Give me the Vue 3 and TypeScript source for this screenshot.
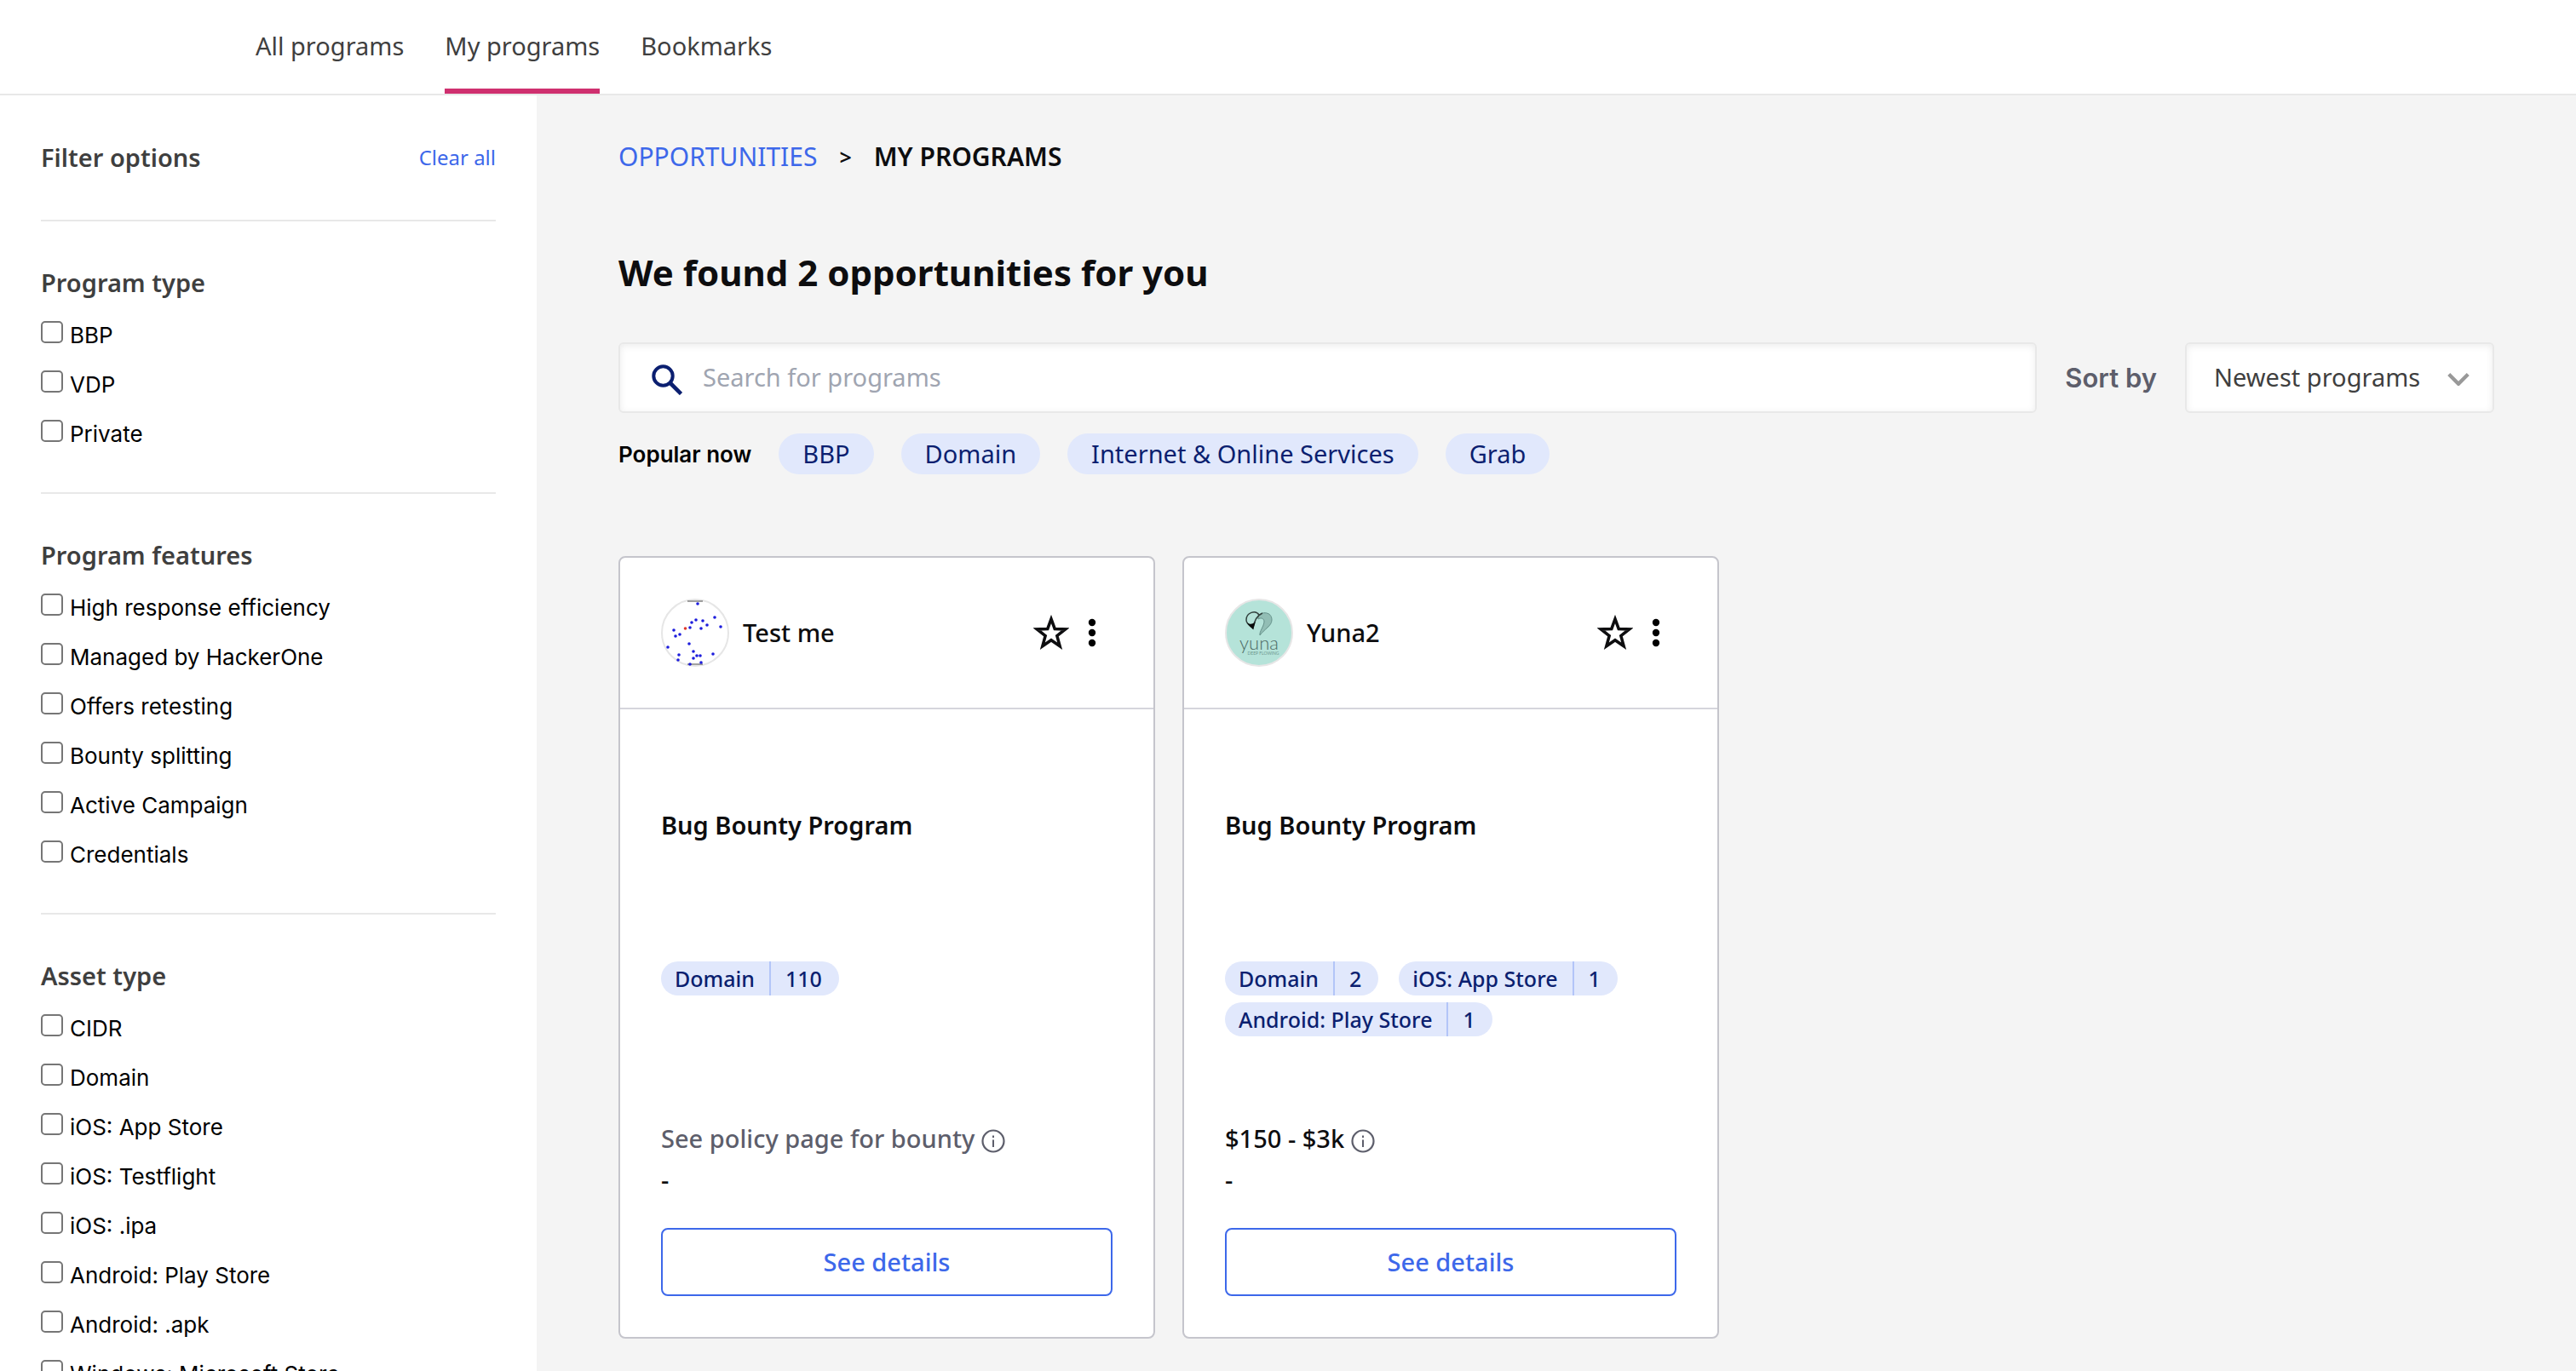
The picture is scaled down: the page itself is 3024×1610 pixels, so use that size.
<script setup lang="ts">
import { ref } from 'vue'

interface FilterGroup {
  title: string
  options: string[]
}
interface Asset {
  name: string
  count: number
}
interface Program {
  name: string
  logo: 'dots' | 'yuna'
  type: string
  assets: Asset[]
  bounty: string
  muted: boolean
  note: string
}

const tabs = ['All programs', 'My programs', 'Bookmarks']
const activeTab = ref('My programs')
const query = ref('')
const sort = ref('Newest programs')
const popular = ['BBP', 'Domain', 'Internet & Online Services', 'Grab']

const groups: FilterGroup[] = [
  { title: 'Program type', options: ['BBP', 'VDP', 'Private'] },
  {
    title: 'Program features',
    options: [
      'High response efficiency',
      'Managed by HackerOne',
      'Offers retesting',
      'Bounty splitting',
      'Active Campaign',
      'Credentials',
    ],
  },
  {
    title: 'Asset type',
    options: [
      'CIDR',
      'Domain',
      'iOS: App Store',
      'iOS: Testflight',
      'iOS: .ipa',
      'Android: Play Store',
      'Android: .apk',
      'Windows: Microsoft Store',
    ],
  },
]
const selected = ref<string[]>([])

const programs: Program[] = [
  {
    name: 'Test me',
    logo: 'dots',
    type: 'Bug Bounty Program',
    assets: [{ name: 'Domain', count: 110 }],
    bounty: 'See policy page for bounty',
    muted: true,
    note: '-',
  },
  {
    name: 'Yuna2',
    logo: 'yuna',
    type: 'Bug Bounty Program',
    assets: [
      { name: 'Domain', count: 2 },
      { name: 'iOS: App Store', count: 1 },
      { name: 'Android: Play Store', count: 1 },
    ],
    bounty: '$150 - $3k',
    muted: false,
    note: '-',
  },
]

// Centres of the blue dots in the first program's logo, on an 80 unit canvas
const dots: [number, number][] = [
  [43, 6], [63, 22], [70, 33], [54, 31], [49, 26], [41, 25], [36, 28], [34, 34],
  [47, 35], [15, 37], [17, 44], [22, 42], [33, 53], [8, 57], [38, 62], [21, 66],
  [42, 67], [46, 67], [38, 70], [61, 65], [20, 72], [47, 75], [34, 77],
]
</script>

<template>
  <div class="page">
    <header class="topbar">
      <nav class="tabs" aria-label="Programs">
        <a
          v-for="tab in tabs"
          :key="tab"
          href="#"
          class="tab"
          :class="{ active: tab === activeTab }"
          @click.prevent="activeTab = tab"
        >{{ tab }}</a>
      </nav>
    </header>

    <div class="layout">
      <aside class="sidebar">
        <div class="filter-head">
          <h2 class="filter-title">Filter options</h2>
          <button type="button" class="clear" @click="selected = []">Clear all</button>
        </div>
        <section v-for="group in groups" :key="group.title" class="group">
          <h2 class="filter-title">{{ group.title }}</h2>
          <div class="options">
            <label v-for="option in group.options" :key="option" class="option">
              <input v-model="selected" type="checkbox" class="box" :value="group.title + option" />
              <span>{{ option }}</span>
            </label>
          </div>
        </section>
      </aside>

      <main class="main">
        <nav class="crumbs" aria-label="Breadcrumb">
          <a href="#" class="crumb-link">OPPORTUNITIES</a>
          <span class="crumb-sep">&gt;</span>
          <span class="crumb-here">MY PROGRAMS</span>
        </nav>

        <h1 class="title">We found 2 opportunities for you</h1>

        <div class="controls">
          <label class="search">
            <svg class="search-icon" viewBox="0 0 36 36" aria-hidden="true">
              <circle cx="13.5" cy="13.5" r="11.200" fill="none" stroke="#0b1f70" stroke-width="4" />
              <path d="M21.500 21.500l13 13" stroke="#0b1f70" stroke-width="4.600" fill="none" />
            </svg>
            <input v-model="query" type="text" class="search-input" placeholder="Search for programs" aria-label="Search for programs" />
          </label>
          <label class="sort-label" for="sort">Sort by</label>
          <div class="select-wrap">
            <select id="sort" v-model="sort" class="select">
              <option>Newest programs</option>
            </select>
            <svg class="chevron" viewBox="0 0 24 14" aria-hidden="true">
              <path d="M1.500 1.500L12 12L22.500 1.500" fill="none" stroke="#999" stroke-width="4" />
            </svg>
          </div>
        </div>

        <div class="popular">
          <span class="popular-label">Popular now</span>
          <button v-for="term in popular" :key="term" type="button" class="chip">{{ term }}</button>
        </div>

        <div class="cards">
          <article v-for="program in programs" :key="program.name" class="card">
            <header class="card-head">
              <svg v-if="program.logo === 'dots'" class="logo" viewBox="0 0 80 80" aria-hidden="true">
                <circle cx="40" cy="40" r="39" fill="#fff" stroke="#e6e6e6" stroke-width="2" />
                <path d="M31 3h18M31 77h18" stroke="#444" stroke-width="1" />
                <circle v-for="(dot, i) in dots" :key="i" :cx="dot[0]" :cy="dot[1]" r="1.800" fill="#1c1cdc" />
                <circle cx="28.500" cy="35" r="1.800" fill="#e03a2f" />
              </svg>
              <svg v-else class="logo" viewBox="0 0 80 80" aria-hidden="true">
                <circle cx="40" cy="40" r="39" fill="#b5e3d9" stroke="#e6e6e6" stroke-width="2" />
                <path d="M39 20C43 15 55 15 55 25C55 32 46 36 41 43C40 39 46 32 46 27C46 23 42 22 39 24Z" fill="#92beb5" stroke="#65918a" stroke-width="1" />
                <path d="M40 19C36 13 25 16 25 25C25 30 30 32 33 35C34 27 37 20 44 17" fill="none" stroke="#33423f" stroke-width="1.500" />
                <path d="M26 28C29 31 33 30 36 27L33 36C31 34 27 31 26 28Z" fill="#080c0b" />
                <text x="40" y="60" text-anchor="middle" class="logo-word">yuna</text>
                <text x="45" y="66" text-anchor="middle" class="logo-tag">DEEP FLOWING</text>
              </svg>
              <h3 class="card-name">{{ program.name }}</h3>
              <button type="button" class="icon-button" :aria-label="'Bookmark ' + program.name">
                <svg class="star" viewBox="0 0 38 38" aria-hidden="true">
                  <path d="M19 4.500L22.800 14.900L34 15.300L25.200 22.300L28.200 33.200L19 26.900L9.800 33.200L12.800 22.300L4 15.300L15.200 14.900Z" fill="none" stroke="#0d0d0f" stroke-width="3.200" />
                </svg>
              </button>
              <button type="button" class="icon-button" :aria-label="'More actions for ' + program.name">
                <svg class="more" viewBox="0 0 12 34" aria-hidden="true">
                  <circle cx="6" cy="5" r="4.200" /><circle cx="6" cy="17" r="4.200" /><circle cx="6" cy="29" r="4.200" />
                </svg>
              </button>
            </header>
            <div class="card-body">
              <p class="card-type">{{ program.type }}</p>
              <ul class="assets">
                <li v-for="asset in program.assets" :key="asset.name" class="asset">
                  <span class="asset-name">{{ asset.name }}</span>
                  <span class="asset-count">{{ asset.count }}</span>
                </li>
              </ul>
              <p class="bounty" :class="{ muted: program.muted }">
                {{ program.bounty }}
                <svg class="info" viewBox="0 0 28 28" aria-hidden="true">
                  <circle cx="14" cy="14" r="12.500" fill="none" stroke="#5d5e6b" stroke-width="2.200" />
                  <path d="M14 12.500V21M14 7.500V10" stroke="#5d5e6b" stroke-width="2" />
                </svg>
              </p>
              <p class="bounty">{{ program.note }}</p>
              <button type="button" class="details">See details</button>
            </div>
          </article>
        </div>
      </main>
    </div>
  </div>
</template>

<style>
body {
  margin: 0;
}
</style>

<style scoped>
.page {
  display: flex;
  flex-direction: column;
  height: 100vh;
  overflow: hidden;
  background: #fff;
  color: #0d0d0f;
  font-family: 'Noto Sans', sans-serif;
  font-size: 29px;
  line-height: 48px;
}
h1, h2, h3, p, ul {
  margin: 0;
  padding: 0;
}
button {
  padding: 0;
  border: 0;
  background: none;
  color: inherit;
  font: inherit;
  cursor: pointer;
}
.topbar {
  flex: none;
  border-bottom: 2px solid #e8e8e8;
}
.tabs {
  display: flex;
  gap: 48px;
  height: 110px;
  padding-left: 300px;
}
.tab {
  box-sizing: border-box;
  border-bottom: 6px solid transparent;
  color: #3f3f3f;
  line-height: 107px;
  text-decoration: none;
}
.tab.active {
  border-bottom-color: #cf306f;
}
.layout {
  display: flex;
  flex: 1;
  min-height: 0;
}
.sidebar {
  box-sizing: border-box;
  flex: none;
  width: 630px;
  padding: 0 48px;
  overflow: hidden;
}
.filter-head {
  display: flex;
  align-items: center;
  justify-content: space-between;
  padding: 49px 0;
}
.filter-title {
  color: #3f3f3f;
  font-size: 29px;
  font-weight: 600;
  line-height: 48px;
}
.clear {
  color: #3d68ea;
  font-size: 24px;
}
.group {
  padding: 48px 0 51px;
  border-top: 2px solid #e8e8e8;
}
.options {
  display: flex;
  flex-direction: column;
  gap: 24px;
  margin-top: 21px;
}
.option {
  display: flex;
  align-items: flex-start;
  gap: 8px;
  color: #000;
  font-family: Inter, sans-serif;
  font-size: 26px;
  line-height: 34px;
}
.box {
  box-sizing: border-box;
  width: 26px;
  height: 26px;
  margin: 0;
  border: 2px solid #767676;
  border-radius: 5px;
  background: #fff;
  appearance: none;
}
.main {
  flex: 1;
  min-width: 0;
  padding: 48px 96px 0;
  background: #f4f4f4;
}
.crumbs {
  display: flex;
  gap: 26px;
  font-size: 30px;
}
.crumb-link {
  color: #3d68ea;
  text-decoration: none;
}
.crumb-sep {
  font-size: 25px;
  font-weight: 600;
}
.crumb-here {
  font-weight: 600;
}
.title {
  margin-top: 80px;
  font-size: 42px;
  font-weight: 700;
  line-height: 64px;
}
.controls {
  display: flex;
  align-items: center;
  gap: 33px;
  margin-top: 50px;
}
.search,
.select {
  box-sizing: border-box;
  height: 83px;
  border: 2px solid #e8e8e8;
  border-radius: 6px;
  background: #fff;
  box-shadow: inset 0 2px 8px rgba(0, 0, 0, 0.08);
}
.search {
  display: flex;
  flex: 1;
  align-items: center;
  gap: 24px;
  padding: 0 37px;
}
.search-icon {
  width: 36px;
  height: 36px;
  margin-top: 4px;
}
.search-input {
  flex: 1;
  min-width: 0;
  padding: 0 0 2px;
  border: 0;
  outline: 0;
  background: transparent;
  color: #3f3f3f;
  font: inherit;
}
.search-input::placeholder {
  color: #a0a5b1;
  opacity: 1;
}
.sort-label {
  color: #5d5e6b;
  font-family: Inter, sans-serif;
  font-size: 31px;
  font-weight: 600;
}
.select-wrap {
  position: relative;
  display: flex;
}
.select {
  width: 363px;
  padding: 0 72px 2px 32px;
  color: #3f3f3f;
  font: inherit;
  appearance: none;
}
.chevron {
  position: absolute;
  top: 36px;
  right: 29px;
  width: 26px;
  height: 15px;
  pointer-events: none;
}
.popular {
  display: flex;
  align-items: center;
  gap: 32px;
  margin-top: 24px;
}
.popular-label {
  padding-top: 2px;
  color: #000;
  font-family: Inter, sans-serif;
  font-size: 26px;
  font-weight: 600;
  line-height: 46px;
}
.chip {
  height: 48px;
  padding: 0 28px;
  border-radius: 24px;
  background: #e1e8fc;
  color: #0b1f70;
}
.cards {
  display: grid;
  grid-template-columns: repeat(auto-fill, 630px);
  gap: 32px;
  margin-top: 96px;
}
.card {
  box-sizing: border-box;
  border: 2px solid #c5c5cc;
  border-radius: 8px;
  background: #fff;
}
.card-head {
  display: flex;
  align-items: center;
  padding: 48px;
  border-bottom: 2px solid #d5d5dc;
}
.logo {
  width: 80px;
  height: 80px;
}
.logo-word {
  fill: #4d6b65;
  font-family: Lato, sans-serif;
  font-size: 22px;
  font-weight: 300;
}
.logo-tag {
  fill: #6f9890;
  font-family: Lato, sans-serif;
  font-size: 5px;
}
.card-name {
  flex: 1;
  margin-left: 16px;
  font-size: 29px;
  font-weight: 500;
}
.icon-button {
  display: flex;
  margin-right: 18px;
}
.star {
  width: 42px;
  height: 42px;
  margin-right: 3px;
}
.more {
  width: 12px;
  height: 34px;
}
.card-body {
  display: flex;
  flex-direction: column;
  padding: 112px 48px 48px;
}
.card-type {
  font-weight: 600;
}
.assets {
  display: flex;
  flex-wrap: wrap;
  align-content: flex-start;
  gap: 8px 24px;
  height: 184px;
  margin-top: 136px;
  list-style: none;
}
.asset {
  display: flex;
  border-radius: 20px;
  background: #e1e8fc;
  color: #0b1f70;
  font-size: 25px;
  font-weight: 500;
  line-height: 40px;
}
.asset-name {
  padding: 0 17px 0 16px;
}
.asset-count {
  padding: 0 20px 0 17px;
  border-left: 2px solid #b3c5f8;
}
.bounty {
  display: flex;
  align-items: center;
  gap: 8px;
  font-weight: 500;
}
.muted {
  color: #5d5e6b;
}
.info {
  width: 28px;
  height: 28px;
  margin-top: 6px;
}
.details {
  box-sizing: border-box;
  height: 80px;
  margin-top: 33px;
  border: 2px solid #3d68ea;
  border-radius: 8px;
  color: #3d68ea;
  font-weight: 500;
}
</style>
